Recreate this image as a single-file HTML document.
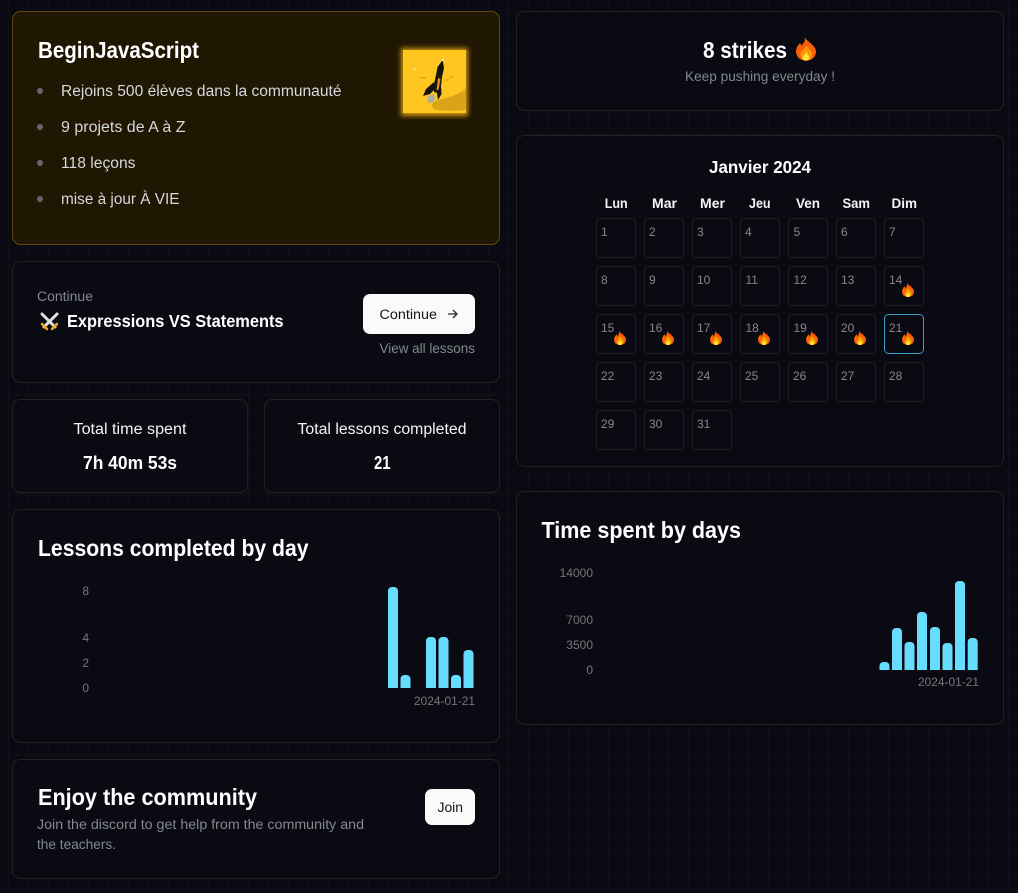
<!DOCTYPE html>
<html><head><meta charset="utf-8"><title>Dashboard</title>
<style>
html,body{margin:0;padding:0;width:1018px;height:893px;overflow:hidden;background:#090a12}
svg{display:block;position:absolute;left:0;top:0}
text{font-family:"Liberation Sans",sans-serif;white-space:pre}
.h{font-size:23px;font-weight:700;fill:#fff}
.b{font-weight:700;fill:#fff}
.m{font-size:13.5px;fill:#85888e}
.l{font-size:15.5px;fill:#d6d8dc}
.t{font-size:15.5px;fill:#f4f4f5}
.a{font-size:12px;fill:#75777d}
.w{font-size:13.5px;font-weight:700;fill:#f4f4f5}
.d{font-size:12px;fill:#87878c}
.card{fill:#090a12;stroke:#212226}
.cell{fill:#090a12;stroke:#1f2024}
.bar{fill:#66dcff}
</style></head><body>
<svg width="1018" height="893" viewBox="0 0 1018 893" xmlns="http://www.w3.org/2000/svg">
<defs>
<pattern id="g" x="8" y="14" width="20" height="20" patternUnits="userSpaceOnUse"><path d="M.5 0V20M0 .5H20" stroke="#0f1119" fill="none"/></pattern>
<symbol id="f" viewBox="0 0 12 14">
<path d="M5 0C6 2.500 4.300 3.500 3.300 5C2.900 4.500 2.700 4 2.700 3.200C1 4.800 0 6.500 0 8.500C0 11.800 2.600 14 6 14S12 11.800 12 8.500C12 5 8 3.500 5 0Z" fill="#f4600c"/>
<path d="M6 4.500C6.500 6.300 4 7 3 9C2.200 11 3.500 14 6 14S10.200 11.600 9.500 9.200C9 7.500 7 6.500 6 4.500Z" fill="#ff9800"/>
<path d="M6 8.500C6.200 9.700 4 10.600 4 12.200C4 13.300 4.900 14 6 14S8 13.300 8 12.200C8 10.800 6.500 10 6 8.500Z" fill="#ffe23b"/>
</symbol>
<filter id="gl" x="-30%" y="-30%" width="160%" height="160%"><feGaussianBlur stdDeviation="2.5"/></filter>
</defs>
<rect width="1018" height="893" fill="url(#g)"/>

<!-- Card 1 -->
<rect x="12.5" y="11.5" width="487" height="233" rx="8" fill="#201703" stroke="#5c4a0d"/>
<text class="h" x="38" y="58" textLength="161" lengthAdjust="spacingAndGlyphs">BeginJavaScript</text>
<g fill="#67666e"><circle cx="40" cy="91" r="3"/><circle cx="40" cy="127" r="3"/><circle cx="40" cy="163" r="3"/><circle cx="40" cy="199" r="3"/></g>
<text class="l" x="61" y="96" textLength="280.5" lengthAdjust="spacingAndGlyphs">Rejoins 500 élèves dans la communauté</text>
<text class="l" x="61" y="132" textLength="124.5" lengthAdjust="spacingAndGlyphs">9 projets de A à Z</text>
<text class="l" x="61" y="168" textLength="74.5" lengthAdjust="spacingAndGlyphs">118 leçons</text>
<text class="l" x="61" y="204" textLength="118.5" lengthAdjust="spacingAndGlyphs">mise à jour À VIE</text>
<!-- rocket tile -->
<rect x="401" y="48" width="67" height="68" fill="#c8930f" filter="url(#gl)"/>
<rect x="403" y="50" width="63" height="63" fill="#fec61f"/>
<path d="M466 88C460 95 445 98 436 101C431 103 431 108 436 110C446 111 456 111 466 110Z" fill="#d9a418"/>
<g>
<path d="M442.700 60L444 68L442 77L436 75L437.500 67Z" fill="#15130f"/>
<path d="M436 75L442 77L441 86L438 93L434 92L434 84Z" fill="#171410"/>
<path d="M438 78L440.500 79L438.500 90L436.500 90Z" fill="#e0951a"/>
<path d="M434 82L426 89L423 96L430 94L434 90Z" fill="#15130f"/>
<path d="M441 86L441.500 94L438 100L437 93Z" fill="#15130f"/>
<path d="M428 96L434 94L435 100L432 103L427 102Z" fill="#b0ada5"/>
<circle cx="442.700" cy="60" r="1.100" fill="#f3e7c4"/>
<circle cx="414.500" cy="69" r="1" fill="#fff1c4"/>
<path d="M420 77.500h3M423 78h3M446 80h3M450 77h3" stroke="#c9971a" fill="none"/>
</g>

<!-- Card 2 -->
<rect class="card" x="12.5" y="261.5" width="487" height="121" rx="8"/>
<text class="m" x="37" y="301" textLength="56" lengthAdjust="spacingAndGlyphs">Continue</text>
<g fill="none" stroke-linecap="round">
<path d="M42 314L55 327M57 314L44 327" stroke="#e0e2e5" stroke-width="3"/>
<path d="M42 324L47 329M57 324L52 329" stroke="#f2a91b" stroke-width="2.500"/>
</g>
<text class="b" x="67" y="327" font-size="17.500" textLength="216.500" lengthAdjust="spacingAndGlyphs">Expressions VS Statements</text>
<rect x="363" y="294" width="112" height="40" rx="7" fill="#fafafa"/>
<text x="379.500" y="319" font-size="13.500" fill="#111318" textLength="57.500" lengthAdjust="spacingAndGlyphs">Continue</text>
<path d="M448 314H457M453 310L457 314L453 318" fill="none" stroke="#25262b" stroke-width="1.300"/>
<text class="m" x="379.500" y="353" textLength="95.500" lengthAdjust="spacingAndGlyphs">View all lessons</text>

<!-- Stats -->
<rect class="card" x="12.5" y="399.500" width="235" height="93" rx="8"/>
<rect class="card" x="264.500" y="399.500" width="235" height="93" rx="8"/>
<text class="t" x="73.500" y="434" textLength="113" lengthAdjust="spacingAndGlyphs">Total time spent</text>
<text class="t" x="297.500" y="434" textLength="169" lengthAdjust="spacingAndGlyphs">Total lessons completed</text>
<text class="b" x="83" y="469" font-size="18" textLength="94" lengthAdjust="spacingAndGlyphs">7h 40m 53s</text>
<text class="b" x="374" y="469" font-size="18" textLength="16.500" lengthAdjust="spacingAndGlyphs">21</text>

<!-- Lessons chart -->
<rect class="card" x="12.5" y="509.500" width="487" height="233" rx="8"/>
<text class="h" x="38" y="556" textLength="270.500" lengthAdjust="spacingAndGlyphs">Lessons completed by day</text>
<text class="a" x="89" y="595" text-anchor="end">8</text>
<text class="a" x="89" y="642" text-anchor="end">4</text>
<text class="a" x="89" y="667" text-anchor="end">2</text>
<text class="a" x="89" y="692" text-anchor="end">0</text>
<g class="bar">
<path d="M388 688V591a4 4 0 0 1 4-4h2a4 4 0 0 1 4 4V688Z"/>
<path d="M400.500 688V679a4 4 0 0 1 4-4h2a4 4 0 0 1 4 4V688Z"/>
<path d="M426 688V641a4 4 0 0 1 4-4h2a4 4 0 0 1 4 4V688Z"/>
<path d="M438.500 688V641a4 4 0 0 1 4-4h2a4 4 0 0 1 4 4V688Z"/>
<path d="M451 688V679a4 4 0 0 1 4-4h2a4 4 0 0 1 4 4V688Z"/>
<path d="M463.500 688V654a4 4 0 0 1 4-4h2a4 4 0 0 1 4 4V688Z"/>
</g>
<text class="a" x="414" y="705" textLength="61" lengthAdjust="spacingAndGlyphs">2024-01-21</text>

<!-- Community -->
<rect class="card" x="12.5" y="759.500" width="487" height="119" rx="8"/>
<text class="h" x="38" y="805" textLength="219" lengthAdjust="spacingAndGlyphs">Enjoy the community</text>
<text class="m" x="37" y="829" textLength="327" lengthAdjust="spacingAndGlyphs">Join the discord to get help from the community and</text>
<text class="m" x="37" y="849" textLength="79" lengthAdjust="spacingAndGlyphs">the teachers.</text>
<rect x="425" y="789" width="50" height="36" rx="7" fill="#fafafa"/>
<text x="437.500" y="812" font-size="13.500" fill="#111318" textLength="25.500" lengthAdjust="spacingAndGlyphs">Join</text>

<!-- Strikes -->
<rect class="card" x="516.500" y="11.500" width="487" height="99" rx="8"/>
<text class="h" x="703" y="58" textLength="84" lengthAdjust="spacingAndGlyphs">8 strikes</text>
<use href="#f" x="796" y="37" width="20" height="24"/>
<text class="m" x="685" y="81" textLength="150" lengthAdjust="spacingAndGlyphs">Keep pushing everyday !</text>

<!-- Calendar -->
<rect class="card" x="516.500" y="135.500" width="487" height="331" rx="8"/>
<text class="b" x="709" y="173" font-size="17.500" textLength="102" lengthAdjust="spacingAndGlyphs">Janvier 2024</text>
<text class="w" x="604.700" y="208" textLength="23" lengthAdjust="spacingAndGlyphs">Lun</text>
<text class="w" x="652" y="208" textLength="25" lengthAdjust="spacingAndGlyphs">Mar</text>
<text class="w" x="700" y="208" textLength="25" lengthAdjust="spacingAndGlyphs">Mer</text>
<text class="w" x="749" y="208" textLength="21.500" lengthAdjust="spacingAndGlyphs">Jeu</text>
<text class="w" x="796" y="208" textLength="24" lengthAdjust="spacingAndGlyphs">Ven</text>
<text class="w" x="842.500" y="208" textLength="27.500" lengthAdjust="spacingAndGlyphs">Sam</text>
<text class="w" x="891.500" y="208" textLength="25.500" lengthAdjust="spacingAndGlyphs">Dim</text>
<g>
<rect class="cell" x="596.500" y="218.500" width="39" height="39" rx="4"/><rect class="cell" x="644.500" y="218.500" width="39" height="39" rx="4"/><rect class="cell" x="692.500" y="218.500" width="39" height="39" rx="4"/><rect class="cell" x="740.500" y="218.500" width="39" height="39" rx="4"/><rect class="cell" x="788.500" y="218.500" width="39" height="39" rx="4"/><rect class="cell" x="836.500" y="218.500" width="39" height="39" rx="4"/><rect class="cell" x="884.500" y="218.500" width="39" height="39" rx="4"/>
<rect class="cell" x="596.500" y="266.500" width="39" height="39" rx="4"/><rect class="cell" x="644.500" y="266.500" width="39" height="39" rx="4"/><rect class="cell" x="692.500" y="266.500" width="39" height="39" rx="4"/><rect class="cell" x="740.500" y="266.500" width="39" height="39" rx="4"/><rect class="cell" x="788.500" y="266.500" width="39" height="39" rx="4"/><rect class="cell" x="836.500" y="266.500" width="39" height="39" rx="4"/><rect class="cell" x="884.500" y="266.500" width="39" height="39" rx="4"/>
<rect class="cell" x="596.500" y="314.500" width="39" height="39" rx="4"/><rect class="cell" x="644.500" y="314.500" width="39" height="39" rx="4"/><rect class="cell" x="692.500" y="314.500" width="39" height="39" rx="4"/><rect class="cell" x="740.500" y="314.500" width="39" height="39" rx="4"/><rect class="cell" x="788.500" y="314.500" width="39" height="39" rx="4"/><rect class="cell" x="836.500" y="314.500" width="39" height="39" rx="4"/><rect x="884.500" y="314.500" width="39" height="39" rx="4" fill="#090a12" stroke="#3f9dc6"/>
<rect class="cell" x="596.500" y="362.500" width="39" height="39" rx="4"/><rect class="cell" x="644.500" y="362.500" width="39" height="39" rx="4"/><rect class="cell" x="692.500" y="362.500" width="39" height="39" rx="4"/><rect class="cell" x="740.500" y="362.500" width="39" height="39" rx="4"/><rect class="cell" x="788.500" y="362.500" width="39" height="39" rx="4"/><rect class="cell" x="836.500" y="362.500" width="39" height="39" rx="4"/><rect class="cell" x="884.500" y="362.500" width="39" height="39" rx="4"/>
<rect class="cell" x="596.500" y="410.500" width="39" height="39" rx="4"/><rect class="cell" x="644.500" y="410.500" width="39" height="39" rx="4"/><rect class="cell" x="692.500" y="410.500" width="39" height="39" rx="4"/>
</g>
<g class="d">
<text class="d" x="601" y="236">1</text><text class="d" x="649" y="236">2</text><text class="d" x="697" y="236">3</text><text class="d" x="745" y="236">4</text><text class="d" x="793.500" y="236">5</text><text class="d" x="841" y="236">6</text><text class="d" x="889" y="236">7</text>
<text class="d" x="601" y="284">8</text><text class="d" x="649" y="284">9</text><text class="d" x="697" y="284">10</text><text class="d" x="745.500" y="284">11</text><text class="d" x="793.500" y="284">12</text><text class="d" x="841" y="284">13</text><text class="d" x="889" y="284">14</text>
<text class="d" x="601" y="332">15</text><text class="d" x="649" y="332">16</text><text class="d" x="697" y="332">17</text><text class="d" x="745.500" y="332">18</text><text class="d" x="793.500" y="332">19</text><text class="d" x="841" y="332">20</text><text class="d" x="889" y="332">21</text>
<text class="d" x="601" y="380">22</text><text class="d" x="649" y="380">23</text><text class="d" x="697" y="380">24</text><text class="d" x="745" y="380">25</text><text class="d" x="793" y="380">26</text><text class="d" x="841" y="380">27</text><text class="d" x="889" y="380">28</text>
<text class="d" x="601" y="428">29</text><text class="d" x="649" y="428">30</text><text class="d" x="697" y="428">31</text>
</g>
<use href="#f" x="902" y="283" width="12" height="14"/>
<use href="#f" x="614" y="331" width="12" height="14"/><use href="#f" x="662" y="331" width="12" height="14"/><use href="#f" x="710" y="331" width="12" height="14"/><use href="#f" x="758" y="331" width="12" height="14"/><use href="#f" x="806" y="331" width="12" height="14"/><use href="#f" x="854" y="331" width="12" height="14"/><use href="#f" x="902" y="331" width="12" height="14"/>

<!-- Time chart -->
<rect class="card" x="516.500" y="491.500" width="487" height="233" rx="8"/>
<text class="h" x="541.500" y="538" textLength="199.500" lengthAdjust="spacingAndGlyphs">Time spent by days</text>
<text class="a" x="593" y="577" text-anchor="end">14000</text>
<text class="a" x="593" y="624" text-anchor="end">7000</text>
<text class="a" x="593" y="649" text-anchor="end">3500</text>
<text class="a" x="593" y="674" text-anchor="end">0</text>
<g class="bar">
<path d="M879.500 670V666a4 4 0 0 1 4-4h2a4 4 0 0 1 4 4V670Z"/>
<path d="M892 670V632a4 4 0 0 1 4-4h2a4 4 0 0 1 4 4V670Z"/>
<path d="M904.500 670V646a4 4 0 0 1 4-4h2a4 4 0 0 1 4 4V670Z"/>
<path d="M917 670V616a4 4 0 0 1 4-4h2a4 4 0 0 1 4 4V670Z"/>
<path d="M930 670V631a4 4 0 0 1 4-4h2a4 4 0 0 1 4 4V670Z"/>
<path d="M942.500 670V647a4 4 0 0 1 4-4h2a4 4 0 0 1 4 4V670Z"/>
<path d="M955 670V585a4 4 0 0 1 4-4h2a4 4 0 0 1 4 4V670Z"/>
<path d="M967.700 670V642a4 4 0 0 1 4-4h2a4 4 0 0 1 4 4V670Z"/>
</g>
<text class="a" x="918" y="686" textLength="61" lengthAdjust="spacingAndGlyphs">2024-01-21</text>
</svg>
</body></html>
